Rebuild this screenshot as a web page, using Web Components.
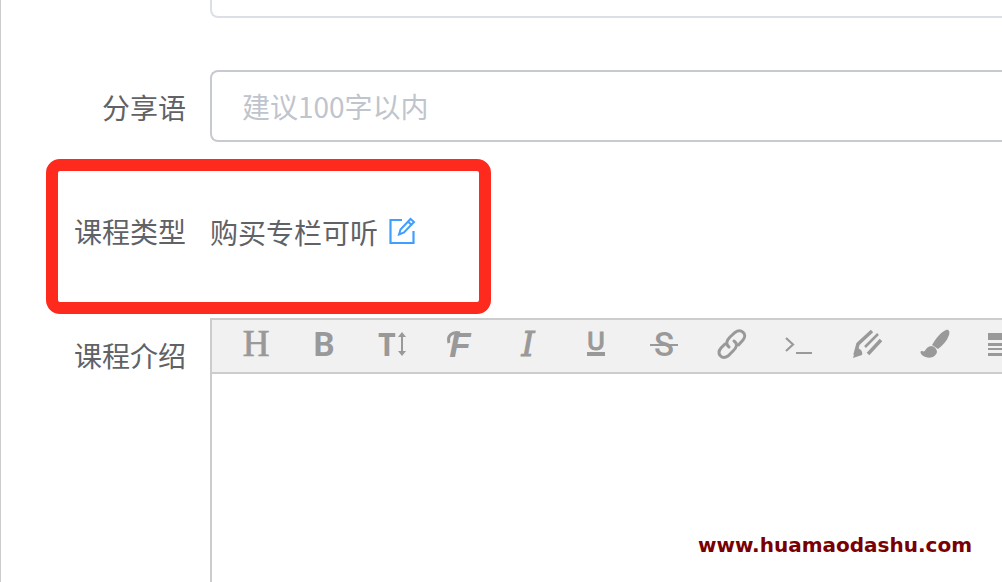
<!DOCTYPE html>
<html lang="zh-CN">
<head>
<meta charset="utf-8">
<title>课程编辑</title>
<style>
html, body { margin: 0; height: 100%; }
body { font-family: "Noto Sans CJK SC", sans-serif; font-size: 28px; color: #606266; background: #fff; overflow: hidden; }
</style>
</head>
<body>
<course-form></course-form>
<script>
class FormRow extends HTMLElement {
  constructor() {
    super();
    this.attachShadow({ mode: 'open' }).innerHTML = `
      <style>
        :host { display: flex; position: relative; align-items: flex-start; min-height: 76px; }
        .label { flex: 0 0 185px; padding-right: 24px; text-align: right; line-height: 74px; }
        .content { flex: 1; min-width: 0; align-self: stretch; display: flex; flex-direction: column; }
      </style>
      <div class="label"><slot name="label"></slot></div>
      <div class="content"><slot></slot></div>
      <slot name="mark"></slot>`;
  }
}
customElements.define('form-row', FormRow);

class TextField extends HTMLElement {
  constructor() {
    super();
    const name = this.getAttribute('label') || '';
    const hint = this.getAttribute('placeholder') || '';
    this.attachShadow({ mode: 'open' }).innerHTML = `
      <style>
        :host { display: block; --line: #dcdfe6; }
        :host([active]) { --line: #c8cad2; }
        input { display: block; box-sizing: border-box; width: 100%; height: 72px; margin: 0; padding: 0 30px;
          border: 2px solid var(--line); border-right: 0; border-radius: 8px 0 0 8px; background: #fff;
          font: inherit; color: #606266; outline: none; }
        input::placeholder { color: #c0c4cc; opacity: 1; }
      </style>
      <input type="text" aria-label="${name}" placeholder="${hint}">`;
  }
}
customElements.define('text-field', TextField);

class CourseType extends HTMLElement {
  constructor() {
    super();
    this.attachShadow({ mode: 'open' }).innerHTML = `
      <style>
        :host { display: flex; align-items: center; gap: 10px; line-height: 76px; }
        button { display: flex; padding: 0; border: 0; background: none; color: #409eff; cursor: pointer; }
        svg { display: block; width: 28px; height: 28px; margin-bottom: 2px; }
      </style>
      <slot></slot>
      <button type="button" aria-label="编辑"><svg viewBox="0 0 28 28" fill="none" stroke="currentColor" stroke-width="2.200">
        <path d="M14 3H2.500V26H25.500V14"/>
        <path d="M11 17.500L12.500 12.500L22.500 2L26 5L16 15.500Z M20 4.500L23.500 8" stroke-width="2"/>
      </svg></button>`;
  }
}
customElements.define('course-type', CourseType);

const ICONS = [
  ['标题', '<text x="18" y="30" text-anchor="middle" font-family="Liberation Serif, serif" font-size="37" stroke="currentColor" stroke-width="0.700">H</text>'],
  ['粗体', '<text x="18" y="30" text-anchor="middle" font-family="Roboto, sans-serif" font-weight="700" font-size="33">B</text>'],
  ['字号', '<text x="13" y="30" text-anchor="middle" font-family="DejaVu Sans Mono, monospace" font-weight="700" font-size="32">T</text><path d="M28 9V27" stroke="currentColor" stroke-width="2"/><path d="M24 11L28 6L32 11ZM24 25L28 30L32 25Z"/>'],
  ['字体', '<path d="M18 7C10 5 5 10 7 17" fill="none" stroke="currentColor" stroke-width="3"/><text x="18" y="31" text-anchor="middle" font-family="Liberation Sans, sans-serif" font-weight="700" font-style="italic" font-size="35">F</text>'],
  ['斜体', '<text x="18" y="30" text-anchor="middle" font-family="DejaVu Serif, serif" font-style="italic" font-size="33" stroke="currentColor" stroke-width="1">I</text>'],
  ['下划线', '<text x="18" y="24" text-anchor="middle" font-family="Noto Sans, sans-serif" font-weight="500" font-size="25" stroke="currentColor" stroke-width="1">U</text><path d="M9 26H27V30H9Z"/>'],
  ['删除线', '<text x="18" y="30" text-anchor="middle" font-family="Roboto, sans-serif" font-weight="500" font-size="33">S</text><path d="M4 18H32V20H4Z"/>'],
  ['链接', '<g fill="none" stroke="currentColor" stroke-width="3" stroke-linecap="round"><path d="M15 21C11 18 13 14 16 11L21 6.500C27 2 34 8 29 14L24.500 19"/><path d="M20 15C24 18 23 21 19 25L14 30C8 34 2 28 7 22L11 18"/></g>'],
  ['代码', '<path d="M4 12L11 18.500L4 25M14 27H30" fill="none" stroke="currentColor" stroke-width="2.200"/>'],
  ['文字颜色', '<g fill="none" stroke="currentColor"><path d="M22 5L8 18L5 29M18 28L31 14" stroke-width="3.500"/><path d="M28 8L15 21" stroke-width="2.500"/></g><path d="M3 32L6 22C11 22 13 26 12 29Z"/>'],
  ['背景颜色', '<path d="M14 19C18 12 23 6 28 4C31 3 32 6 31 9C29 15 25 19 20 23Z"/><path d="M13 20C16 20 19 23 19 26C17 33 9 33 4 29C2 27 2 25 4 25C8 27 7 21 13 20Z"/>'],
  ['对齐', '<path d="M2 7H32V14H2ZM2 17H32V20H2ZM2 22H32V24H2ZM2 27H32V30H2Z"/>']
];

class RichEditor extends HTMLElement {
  constructor() {
    super();
    this.attachShadow({ mode: 'open' }).innerHTML = `
      <style>
        :host { display: flex; flex: 1; flex-direction: column; border: 2px solid #ccc; border-width: 2px 0 0 2px; min-height: 264px; box-sizing: border-box; }
        .bar { display: flex; height: 52px; padding-left: 10px; background: #f1f1f1; border-bottom: 2px solid #ccc; overflow: hidden; }
        button { flex: 0 0 68px; display: flex; justify-content: center; padding: 0; border: 0; background: none; color: #999; cursor: pointer; }
        svg { display: block; width: 36px; height: 52px; fill: currentColor; overflow: visible; }
        .area { flex: 1; outline: none; }
      </style>
      <div class="bar" role="toolbar" aria-label="格式">${ICONS.map(([name, art]) =>
        `<button type="button" aria-label="${name}"><svg viewBox="0 -6 36 52">${art}</svg></button>`).join('')}</div>
      <div class="area" contenteditable="true" role="textbox" aria-multiline="true" aria-label="课程介绍"></div>`;
  }
}
customElements.define('rich-editor', RichEditor);

class HighlightFrame extends HTMLElement {
  constructor() {
    super();
    this.attachShadow({ mode: 'open' }).innerHTML = `
      <style>
        :host { display: block; position: absolute; box-sizing: border-box; left: 45px; top: -35px; width: 445px; height: 155px;
          border: 12px solid #fe2a1d; border-radius: 14px; pointer-events: none; z-index: 1; }
      </style>`;
  }
}
customElements.define('highlight-frame', HighlightFrame);

class SiteMark extends HTMLElement {
  constructor() {
    super();
    this.attachShadow({ mode: 'open' }).innerHTML = `
      <style>
        :host { display: block; position: absolute; right: 30px; bottom: 25px; font: 700 20px/24px "DejaVu Sans", sans-serif; color: #780000; }
      </style><slot></slot>`;
  }
}
customElements.define('site-mark', SiteMark);

class CourseForm extends HTMLElement {
  constructor() {
    super();
    this.attachShadow({ mode: 'open' }).innerHTML = `
      <style>
        :host { display: block; position: relative; box-sizing: border-box; height: 100%; border-left: 1px solid #ccc; overflow: hidden; }
        form { display: flex; flex-direction: column; gap: 48px; margin-top: -54px; }
      </style>
      <form>
        <form-row><text-field label="课程标题"></text-field></form-row>
        <form-row><span slot="label">分享语</span><text-field active label="分享语" placeholder="建议100字以内"></text-field></form-row>
        <form-row><span slot="label">课程类型</span><course-type>购买专栏可听</course-type><highlight-frame slot="mark"></highlight-frame></form-row>
        <form-row><span slot="label">课程介绍</span><rich-editor></rich-editor></form-row>
      </form>
      <site-mark>www.huamaodashu.com</site-mark>`;
  }
}
customElements.define('course-form', CourseForm);
</script>
</body>
</html>
